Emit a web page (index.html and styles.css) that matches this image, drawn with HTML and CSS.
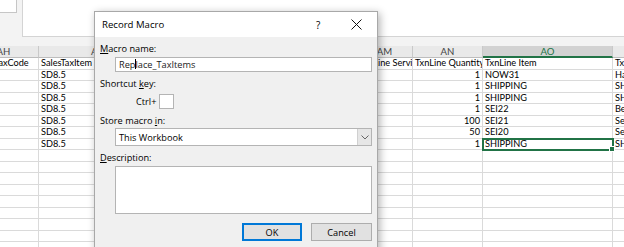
FILE: index.html
```html
<!DOCTYPE html>
<html lang="en">
<head>
  <meta charset="UTF-8">
  <title>Record Macro</title>
  <link rel="stylesheet" href="styles.css">
</head>
<body>
  <div class="excel">
    <div class="toolbar">
      <div class="name-box"></div>
      <div class="formula-bar"></div>
    </div>

    <div class="sheet">
      <div class="row head">
        <div class="cell">AH</div>
        <div class="cell">AI</div>
        <div class="cell">AJ</div>
        <div class="cell">AK</div>
        <div class="cell">AL</div>
        <div class="cell">AM</div>
        <div class="cell">AN</div>
        <div class="cell active">AO</div>
        <div class="cell">AP</div>
      </div>
      <div id="rows"></div>
    </div>
  </div>

  <!-- Record Macro dialog -->
  <div class="dialog">
    <div class="title-bar">
      <span class="title">Record Macro</span>
      <span class="help">?</span>
      <svg class="close" width="11" height="11" viewBox="0 0 11 11">
        <path d="M0.5 0.5 L10.5 10.5 M10.5 0.5 L0.5 10.5" stroke="#111" stroke-width="1" fill="none"/>
      </svg>
    </div>
    <div class="dialog-body">
      <label class="lbl first"><u>M</u>acro name:</label>
      <div class="field name-field">Rep<span class="caret"></span>lace_TaxItems</div>

      <label class="lbl">Shortcut <u>k</u>ey:</label>
      <div class="shortcut">
        <span>Ctrl+</span>
        <div class="key-box"></div>
      </div>

      <label class="lbl">Store macro <u>i</u>n:</label>
      <div class="field select-field">
        <span>This Workbook</span>
        <div class="drop">
          <svg width="8" height="5" viewBox="0 0 8 5">
            <path d="M0.5 0.5 L4 4 L7.5 0.5" stroke="#666" stroke-width="1" fill="none"/>
          </svg>
        </div>
      </div>

      <label class="lbl"><u>D</u>escription:</label>
      <div class="field desc-field"></div>

      <div class="buttons">
        <button class="btn default">OK</button>
        <button class="btn">Cancel</button>
      </div>
    </div>
  </div>

  <script>
    // rows of the sheet: AH, AI, ..., AP
    const data = [
      ["TaxCode", "SalesTaxItem", "", "", "", "TxnLine ServiceDate", "TxnLine Quantity", "TxnLine Item", "TxnLine Desc"],
      ["", "SD8.5", "", "", "", "", "1", "NOW31", "Handling"],
      ["", "SD8.5", "", "", "", "", "1", "SHIPPING", "SHIPPING"],
      ["", "SD8.5", "", "", "", "", "1", "SHIPPING", "SHIPPING"],
      ["", "SD8.5", "", "", "", "", "1", "SEI22", "Bearings"],
      ["", "SD8.5", "", "", "", "", "100", "SEI21", "Seals"],
      ["", "SD8.5", "", "", "", "", "50", "SEI20", "Seals"],
      ["", "SD8.5", "", "", "", "", "1", "SHIPPING", "SHIPPING"]
    ];

    const rows = document.getElementById("rows");
    for (let r = 0; r < 17; r++) {
      const line = data[r] || [];
      const row = document.createElement("div");
      row.className = "row";
      for (let c = 0; c < 9; c++) {
        const cell = document.createElement("div");
        cell.className = "cell";
        const value = line[c] || "";
        if (value !== "" && !isNaN(value)) cell.classList.add("num");
        if (c === 0 && value) cell.classList.add("first-col");
        if (r === 7 && c === 7) cell.classList.add("selected");
        cell.textContent = value;
        row.appendChild(cell);
      }
      rows.appendChild(row);
    }
  </script>
</body>
</html>
```

FILE: styles.css
```css
* {
  box-sizing: border-box;
}

body {
  margin: 0;
  width: 624px;
  height: 247px;
  overflow: hidden;
  position: relative;
  background: #fff;
}

/* ---------- spreadsheet ---------- */

.excel {
  font-family: Lato, 'Liberation Sans', sans-serif;
  font-size: 9.2px;
  color: #000;
}

.toolbar {
  height: 46px;
  background: #f3f3f3;
  display: flex;
  align-items: flex-start;
  gap: 5px;
}

.name-box {
  width: 17px;
  height: 13px;
  background: #fff;
  border: 1px solid #c6c6c6;
  border-top: none;
  border-left: none;
}

.formula-bar {
  flex: 1;
  height: 37px;
  background: #fff;
  border-left: 1px solid #d4d4d4;
  border-bottom: 1px solid #d4d4d4;
}

.sheet {
  margin-left: -31px;
}

.row {
  display: grid;
  grid-template-columns: 70px 114px 77px 70px 57px 56px 70px 130px 60px;
  height: 11.5px;
}

.row .cell {
  border-right: 1px solid #dadada;
  border-bottom: 1px solid #dadada;
  padding: 0 2px;
  line-height: 10.5px;
  white-space: nowrap;
  overflow: hidden;
}

.row .num {
  text-align: right;
}

.row .first-col {
  padding-left: 25px;
}

.row.head {
  height: 12px;
  background: #e9e9e9;
}

.row.head .cell {
  text-align: center;
  color: #444;
  font-size: 9.6px;
  border-right: 1px solid #c9c9c9;
  border-bottom: 1px solid #bdbdbd;
  line-height: 11px;
}

.row.head .active {
  background: #d2d2d2;
  color: #217346;
  border-bottom: 2px solid #217346;
}

.row .selected {
  position: relative;
  overflow: visible;
  outline: 2px solid #217346;
  outline-offset: -1px;
}

.row .selected::after {
  content: "";
  position: absolute;
  right: -3px;
  bottom: -3px;
  width: 4px;
  height: 4px;
  background: #217346;
  border: 1px solid #fff;
}

/* ---------- dialog ---------- */

.dialog {
  position: absolute;
  left: 94px;
  top: 11px;
  width: 284px;
  height: 250px;
  background: #f0f0f0;
  border: 1px solid #a8a8a8;
  box-shadow: 2px 2px 8px rgba(0, 0, 0, 0.3);
  font-family: 'Open Sans', 'Noto Sans', sans-serif;
  font-size: 9.2px;
  color: #000;
}

.title-bar {
  height: 25px;
  background: #fff;
  display: flex;
  align-items: center;
  padding-left: 7px;
}

.title {
  flex: 1;
  font-size: 9.6px;
}

.help {
  width: 35px;
  font-size: 10px;
}

.close {
  margin-right: 15px;
}

.dialog-body {
  display: flex;
  flex-direction: column;
  padding: 0 5px 0 5px;
}

.lbl {
  line-height: 12px;
  margin-top: 6px;
}

.field {
  margin-left: 15px;
  background: #fff;
  border: 1px solid #b4b4b4;
  padding-left: 3px;
}

.name-field {
  height: 15px;
  line-height: 13px;
  margin-top: 2px;
  color: #1a1a1a;
}

.caret {
  display: inline-block;
  width: 1px;
  height: 10px;
  margin-right: -1px;
  background: #000;
  vertical-align: -1px;
}

.shortcut {
  display: flex;
  align-items: center;
  gap: 3px;
  margin-left: 36px;
  margin-top: 4px;
  height: 15px;
}

.key-box {
  width: 15px;
  height: 15px;
  background: #fff;
  border: 1px solid #b4b4b4;
}

.select-field {
  height: 18px;
  margin-top: 1px;
  display: flex;
  align-items: center;
  justify-content: space-between;
}

.drop {
  width: 14px;
  height: 16px;
  background: #e6e6e6;
  border-left: 1px solid #d0d0d0;
  display: flex;
  align-items: center;
  justify-content: center;
}

.desc-field {
  height: 48px;
  margin-top: 2px;
}

.buttons {
  display: flex;
  justify-content: flex-end;
  gap: 9px;
  margin-top: 9px;
}

.btn {
  width: 61px;
  height: 18px;
  background: #e1e1e1;
  border: 1px solid #adadad;
  font-family: 'Open Sans', 'Noto Sans', sans-serif;
  font-size: 9.2px;
  color: #000;
  padding: 0;
}

.btn.default {
  border: 2px solid #0078d7;
  width: 60px;
}
```
